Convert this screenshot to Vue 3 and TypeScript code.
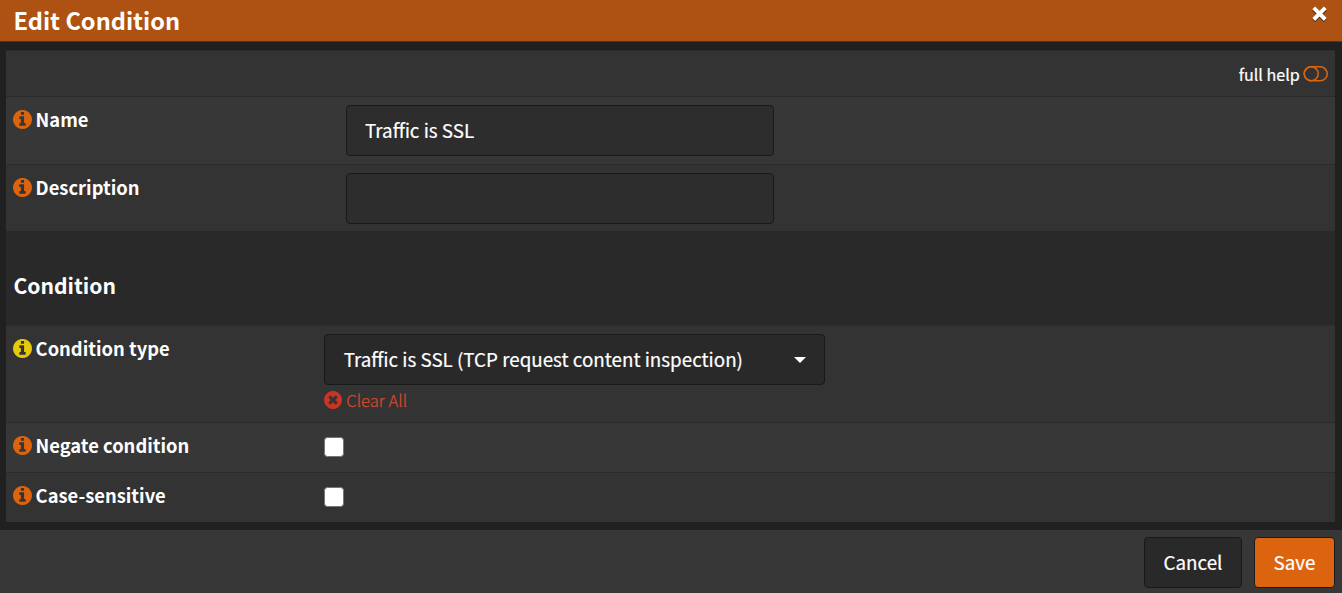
<script setup lang="ts">
import { ref } from 'vue'

const name = ref('Traffic is SSL')
const description = ref('')
const conditionType = ref('Traffic is SSL (TCP request content inspection)')
const negate = ref(false)
const caseSensitive = ref(false)

const infoPath =
  'M1024 1248v-160q0-14-9-23t-23-9h-96v-512q0-14-9-23t-23-9h-320q-14 0-23 9t-9 23v160q0 14 9 23t23 9h96v320h-96q-14 0-23 9t-9 23v160q0 14 9 23t23 9h448q14 0 23-9t9-23zM896 352v-160q0-14-9-23t-23-9h-192q-14 0-23 9t-9 23v160q0 14 9 23t23 9h192q14 0 23-9t9-23zM1536 768q0 209-103 385.5t-279.5 279.5-385.5 103-385.5-103-279.5-279.5-103-385.5 103-385.5 279.5-279.5 385.5-103 385.5 103 279.5 279.5 103 385.5z'
</script>

<template>
  <div class="dialog">
    <header class="head">
      <h1 class="title">Edit Condition</h1>
      <button class="close" aria-label="Close">
        <svg class="x" viewBox="0 0 18 18">
          <path class="x-shadow" d="M2.7 4.1 14.3 15.5M14.3 4.1 2.7 15.5" />
          <path class="x-front" d="M2.7 2.9 14.3 14.5M14.3 2.9 2.7 14.5" />
        </svg>
      </button>
    </header>

    <main class="body">
      <div class="row help">
        <span class="help-text">full help</span>
        <svg class="toggle" viewBox="0 0 25 16">
          <rect x="1.2" y="0.8" width="23" height="14" rx="7" />
          <circle cx="8.2" cy="7.8" r="7" />
        </svg>
      </div>
      <div class="row alt name">
        <div class="label"><svg class="info" viewBox="0 0 1536 1536"><path :d="infoPath" /></svg><span>Name</span></div>
        <input v-model="name" class="field" type="text" />
      </div>
      <div class="row desc">
        <div class="label"><svg class="info" viewBox="0 0 1536 1536"><path :d="infoPath" /></svg><span>Description</span></div>
        <input v-model="description" class="field" type="text" />
      </div>
      <div class="section"><h2 class="section-title">Condition</h2></div>
      <div class="row type">
        <div class="label"><svg class="info yellow" viewBox="0 0 1536 1536"><path :d="infoPath" /></svg><span>Condition type</span></div>
        <div class="control">
          <button class="select"><span class="value">{{ conditionType }}</span><i class="caret"></i></button>
          <a class="clear">
            <svg class="clear-icon" viewBox="0 0 1536 1536">
              <path fill-rule="evenodd" d="M1149 994q0-26-19-45l-181-181 181-181q19-19 19-45 0-27-19-46l-90-90q-19-18-46-18-26 0-45 18l-181 181-181-181q-19-18-45-18-27 0-46 18l-90 90q-19 19-19 46 0 26 19 45l181 181-181 181q-19 19-19 45 0 27 19 46l90 90q19 18 46 18 26 0 45-18l181-181 181 181q19 18 45 18 27 0 46-18l90-90q19-19 19-46zM1536 768q0 209-103 385.5t-279.5 279.5-385.5 103-385.5-103-279.5-279.5-103-385.5 103-385.5 279.5-279.5 385.5-103 385.5 103 279.5 279.5 103 385.5z" />
            </svg>
            <span>Clear All</span>
          </a>
        </div>
      </div>
      <div class="row alt check">
        <div class="label"><svg class="info" viewBox="0 0 1536 1536"><path :d="infoPath" /></svg><span>Negate condition</span></div>
        <input v-model="negate" class="box" type="checkbox" />
      </div>
      <div class="row check last">
        <div class="label"><svg class="info" viewBox="0 0 1536 1536"><path :d="infoPath" /></svg><span>Case-sensitive</span></div>
        <input v-model="caseSensitive" class="box" type="checkbox" />
      </div>
    </main>

    <footer class="foot">
      <button class="btn cancel">Cancel</button>
      <button class="btn save">Save</button>
    </footer>
  </div>
</template>

<style>
body {
  margin: 0;
  background: #202020;
}
</style>

<style scoped>
.dialog {
  width: 1342px;
  height: 593px;
  display: flex;
  flex-direction: column;
  box-sizing: border-box;
  overflow: hidden;
  background: #202020;
  color: #fff;
  font-family: "Noto Sans CJK SC", sans-serif;
  font-size: 18.8px;
}
.dialog *,
.dialog *::before {
  box-sizing: border-box;
}
button,
input {
  font: inherit;
  color: inherit;
  margin: 0;
}
.head {
  height: 42px;
  flex: none;
  display: flex;
  justify-content: space-between;
  padding: 0 13px 0 13.5px;
  background: #ad5212;
  border-bottom: 1px solid #4a3426;
}
.title {
  margin: 0;
  font-size: 23.6px;
  line-height: 41px;
  font-weight: 700;
}
.close {
  width: 18px;
  height: 18px;
  margin-top: 5px;
  padding: 0;
  border: 0;
  background: none;
}
.x {
  display: block;
  width: 18px;
  height: 18px;
  fill: none;
  stroke-width: 3.9;
}
.x-shadow {
  stroke: #33200f;
}
.x-front {
  stroke: #fff;
}
.body {
  flex: none;
  margin: 8px 7px 8px 6px;
  border-top: 1px solid #2a2a2a;
}
.row {
  display: flex;
  align-items: flex-start;
  padding-left: 7px;
  background: #333;
  border-bottom: 1px solid #2a2a2a;
}
.alt {
  background: #373737;
}
.help {
  height: 46px;
  align-items: center;
  justify-content: flex-end;
  padding-right: 7px;
}
.help-text {
  font-size: 16.1px;
  line-height: 24px;
  padding-top: 1px;
  -webkit-text-stroke: 0.2px currentColor;
}
.toggle {
  width: 25px;
  height: 16px;
  margin-left: 3.3px;
  fill: none;
  stroke: #dd640f;
  stroke-width: 1.5;
}
.name {
  height: 68px;
}
.desc {
  height: 66px;
  border-bottom: 0;
}
.label {
  width: 311px;
  flex: none;
  display: flex;
  align-items: flex-start;
  gap: 3.6px;
  padding-top: 8px;
  font-weight: 700;
  font-size: 18.35px;
  line-height: 28px;
}
.info {
  width: 19px;
  height: 19px;
  margin-top: 5px;
  fill: #dd640f;
}
.yellow {
  fill: #e6c90c;
}
.field {
  width: 428px;
  height: 51px;
  margin: 8px 0 0 22px;
  padding: 0 18px 2px;
  border: 1px solid #191919;
  border-radius: 4px;
  background: #2d2d2d;
  outline: none;
  -webkit-text-stroke: 0.2px currentColor;
}
.section {
  height: 95px;
  padding: 34px 0 0 7.4px;
  background: #292929;
  border-bottom: 1px solid #2d2d2d;
}
.section-title {
  margin: 0;
  font-size: 21.1px;
  line-height: 40px;
  font-weight: 700;
}
.type {
  height: 97px;
}
.select {
  width: 501px;
  height: 51px;
  margin-top: 8px;
  padding: 0 18px 0 18.7px;
  display: flex;
  align-items: center;
  justify-content: space-between;
  border: 1px solid #191919;
  border-radius: 4px;
  background: #292929;
  -webkit-text-stroke: 0.2px currentColor;
}
.value {
  padding-bottom: 2px;
}
.caret {
  border: 6px solid transparent;
  border-top-color: #fff;
  border-bottom: 0;
}
.clear {
  display: flex;
  align-items: center;
  gap: 4.3px;
  height: 30px;
  color: #d9482b;
  font-size: 16.6px;
  line-height: 30px;
  font-weight: 300;
  -webkit-text-stroke: 0.25px currentColor;
}
.clear-icon {
  width: 18px;
  height: 18px;
  margin-bottom: 1px;
  fill: #cb3424;
}
.check {
  height: 50px;
}
.last {
  height: 49px;
  border-bottom: 0;
}
.box {
  appearance: none;
  width: 19.5px;
  height: 20px;
  margin-top: 14px;
  border: 1px solid #767676;
  border-radius: 3.5px;
  background: #fff;
}
.foot {
  flex: 1;
  display: flex;
  justify-content: flex-end;
  align-items: flex-start;
  gap: 12px;
  padding: 7px 7px 0 0;
  background: #373737;
}
.btn {
  height: 51px;
  padding: 0 0 2px;
  border: 1px solid #191919;
  border-radius: 4px;
  -webkit-text-stroke: 0.2px currentColor;
}
.cancel {
  width: 98px;
  background: #292929;
}
.save {
  width: 81px;
  background: #dd640f;
}
</style>
